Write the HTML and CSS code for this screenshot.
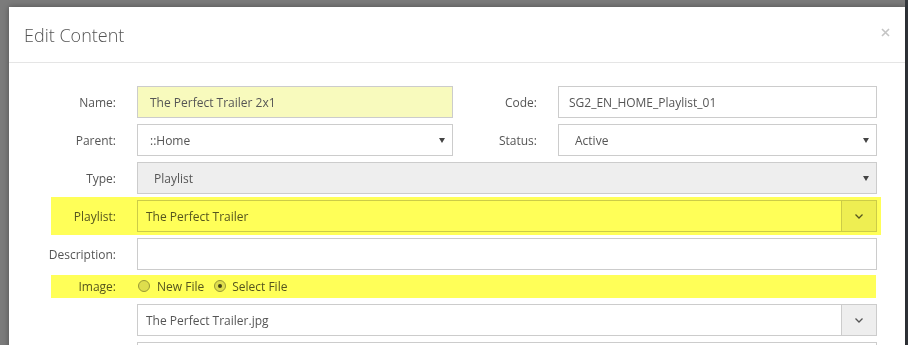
FILE: index.html
```html
<!DOCTYPE html>
<html lang="en">
<head>
    <meta charset="UTF-8">
    <meta name="viewport" content="width=device-width, initial-scale=1.0">
    <title>Edit Content</title>
    <link rel="stylesheet" href="styles.css">
</head>
<body>
    <div class="modal">
        <div class="modal-header">
            <h4 class="modal-title">Edit Content</h4>
            <button class="close" type="button" aria-label="Close">
                <svg width="9" height="9" viewBox="0 0 9 9"><path d="M1 1L8 8M8 1L1 8" stroke="currentColor" stroke-width="1.6"/></svg>
            </button>
        </div>

        <form class="modal-body">
            <div class="row">
                <label>Name:</label>
                <input type="text" class="field field-name" value="The Perfect Trailer 2x1">
                <label>Code:</label>
                <input type="text" class="field field-code" value="SG2_EN_HOME_Playlist_01">
            </div>

            <div class="row">
                <label>Parent:</label>
                <div class="select">
                    <select class="parent"><option>::Home</option></select>
                    <svg class="caret" width="6" height="5" viewBox="0 0 6 5"><path d="M0 0H6L3 5Z"/></svg>
                </div>
                <label>Status:</label>
                <div class="select">
                    <select><option>Active</option></select>
                    <svg class="caret" width="6" height="5" viewBox="0 0 6 5"><path d="M0 0H6L3 5Z"/></svg>
                </div>
            </div>

            <div class="row">
                <label>Type:</label>
                <div class="select disabled full">
                    <select disabled><option>Playlist</option></select>
                    <svg class="caret" width="6" height="5" viewBox="0 0 6 5"><path d="M0 0H6L3 5Z"/></svg>
                </div>
            </div>

            <div class="row highlight">
                <label>Playlist:</label>
                <div class="combo full">
                    <span class="combo-value">The Perfect Trailer</span>
                    <span class="combo-btn">
                        <svg width="8" height="5" viewBox="0 0 8 5"><path d="M0.5 0.5L4 4L7.5 0.5" fill="none" stroke="currentColor" stroke-width="1.3"/></svg>
                    </span>
                </div>
            </div>

            <div class="row">
                <label>Description:</label>
                <input type="text" class="field full">
            </div>

            <div class="row row-radio highlight-thin">
                <label>Image:</label>
                <div class="radios full">
                    <label class="radio"><span class="dot"></span>New File</label>
                    <label class="radio"><span class="dot checked"></span>Select File</label>
                </div>
            </div>

            <div class="row">
                <span></span>
                <div class="combo full">
                    <span class="combo-value">The Perfect Trailer.jpg</span>
                    <span class="combo-btn grey">
                        <svg width="8" height="5" viewBox="0 0 8 5"><path d="M0.5 0.5L4 4L7.5 0.5" fill="none" stroke="currentColor" stroke-width="1.3"/></svg>
                    </span>
                </div>
            </div>

            <div class="row">
                <span></span>
                <input type="text" class="field full">
            </div>
        </form>
    </div>
</body>
</html>
```

FILE: styles.css
```css
:root {
    --text-color: #555;
    --border-color: #ccc;
    --marker: #ffff58;
}

* {
    margin: 0;
    padding: 0;
    box-sizing: border-box;
    font-family: 'Open Sans', sans-serif;
}

body {
    height: 345px;
    overflow: hidden;
    background: linear-gradient(to right, #7b7b7b 905px, #33373c 905px);
}

/* Modal */
.modal {
    margin: 7px 3px 0 9px;
    height: 400px;
    background-color: white;
    box-shadow: 0 0 6px rgba(0, 0, 0, 0.35);
}

.modal-header {
    height: 56px;
    display: flex;
    justify-content: space-between;
    align-items: center;
    padding: 0 15px 0 15px;
    border-bottom: 1px solid #e5e5e5;
}

.modal-title {
    font-size: 18px;
    font-weight: 300;
    color: #555;
}

.close {
    border: none;
    background: none;
    color: #c4c4c4;
    display: flex;
    margin-top: -4px;
}

.modal-body {
    padding-top: 23px;
    display: flex;
    flex-direction: column;
    gap: 6px;
}

/* Form rows */
.row {
    display: grid;
    grid-template-columns: 107px 316px 63px 319px;
    column-gap: 21px;
    align-items: center;
}

.row > label {
    text-align: right;
    font-size: 12px;
    color: var(--text-color);
}

.full {
    grid-column: 2 / 5;
}

.field,
.select,
.combo {
    height: 32px;
    border: 1px solid var(--border-color);
    background-color: white;
    font-size: 12px;
    color: var(--text-color);
}

.field {
    padding: 0 12px;
    outline: none;
}

.field-name {
    background-color: #f8fabd;
}

.field-code {
    padding-left: 10px;
}

.select {
    display: flex;
    align-items: center;
    padding-right: 7px;
}

.select select {
    flex: 1;
    appearance: none;
    border: none;
    background: transparent;
    font-size: 12px;
    color: var(--text-color);
    padding-left: 16px;
    outline: none;
    opacity: 1;
}

.select select.parent {
    padding-left: 12px;
}

.select.disabled {
    background-color: #eee;
}

.select select:disabled {
    color: var(--text-color);
}

.caret {
    fill: #444;
}

.combo {
    display: flex;
    align-items: stretch;
}

.combo-value {
    flex: 1;
    display: flex;
    align-items: center;
    padding-left: 8px;
}

.combo-btn {
    width: 35px;
    display: flex;
    align-items: center;
    justify-content: center;
    border-left: 1px solid var(--border-color);
    background-color: #eee;
    color: #555;
}

/* Highlight marker (annotation) */
.highlight,
.highlight-thin {
    position: relative;
}

.highlight::after,
.highlight-thin::after {
    content: '';
    position: absolute;
    top: -3px;
    bottom: -3px;
    left: 42px;
    right: 24px;
    background-color: var(--marker);
    mix-blend-mode: multiply;
    pointer-events: none;
}

.highlight-thin::after {
    top: 0;
    bottom: 0;
    right: 29px;
}

/* Radio row */
.row-radio {
    height: 23px;
    margin-top: -1px;
}

.radios {
    display: flex;
    align-items: center;
    gap: 10px;
    margin-top: -1px;
}

.radio {
    display: flex;
    align-items: center;
    gap: 7px;
    font-size: 12px;
    color: var(--text-color);
    margin-left: 1px;
}

.radio + .radio {
    margin-left: 0;
    gap: 6px;
}

.dot {
    width: 12px;
    height: 12px;
    border-radius: 50%;
    border: 1px solid #999;
    background-color: #dedede;
    display: flex;
    align-items: center;
    justify-content: center;
}

.dot.checked::before {
    content: '';
    width: 4px;
    height: 4px;
    border-radius: 50%;
    background-color: #444;
}
```
